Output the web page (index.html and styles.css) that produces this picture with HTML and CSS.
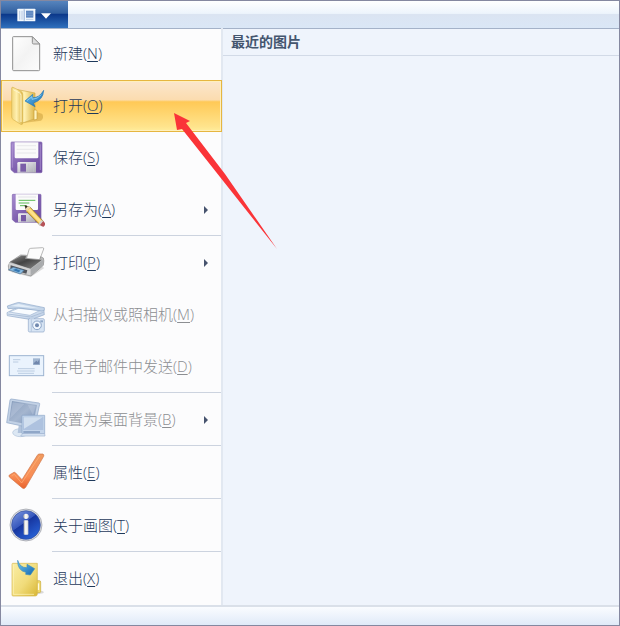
FILE: index.html
```html
<!DOCTYPE html>
<html lang="zh-CN">
<head>
<meta charset="utf-8">
<title>画图</title>
<link rel="stylesheet" href="styles.css">
</head>
<body>
<div class="window">
  <header class="ribbon">
    <button class="app-button" type="button" aria-label="画图">
      <svg class="app-icon" viewBox="0 0 108 42" aria-hidden="true">
        <rect x="1" y="2" width="54" height="38" rx="2" fill="#f4f9fe"/>
        <path d="M8 8v27M15 8v27" stroke="#c3d3e7" stroke-width="4"/>
        <rect x="20" y="4" width="3" height="34" fill="#8eabd2"/>
        <rect x="27" y="8" width="22" height="21" fill="#5d87c0"/>
        <path d="M27 15h22M27 22h22" stroke="#84a5d2" stroke-width="2"/>
        <path d="M27 34h22" stroke="#bacde5" stroke-width="3"/>
        <path d="M72 16h30L87 32z" fill="#fff"/>
      </svg>
    </button>
  </header>
  <div class="backstage">
    <nav class="menu">
      <button class="item" type="button">
        <svg class="icon" viewBox="0 0 120 120" aria-hidden="true">
          <defs><linearGradient id="page" x2="1" y2="1"><stop stop-color="#fff"/><stop offset=".5" stop-color="#f3f3f3"/><stop offset="1" stop-color="#fdfdfd"/></linearGradient></defs>
          <path d="M22 8h57l22 22v77q0 3-3 3H23q-3 0-3-3V10q0-2 2-2z" fill="url(#page)" stroke="#8f8f8f" stroke-width="3"/>
          <path d="M79 8v18q0 4 4 4h18z" fill="#dedede" stroke="#8f8f8f" stroke-width="3"/>
        </svg>
        <span class="label">新建(<u>N</u>)</span>
      </button>
      <button class="item item-active" type="button">
        <svg class="icon" viewBox="0 0 120 120" aria-hidden="true">
          <defs>
            <linearGradient id="fold" x2="1"><stop stop-color="#f1d67d"/><stop offset=".45" stop-color="#fff0b0"/><stop offset="1" stop-color="#dcb64a"/></linearGradient>
            <linearGradient id="blue" x2="1" y2="1"><stop stop-color="#72c8f1"/><stop offset="1" stop-color="#1266b0"/></linearGradient>
          </defs>
          <path d="M45 112l60-8q10-8 4-20l-14-5z" fill="#b88b28" opacity=".4"/>
          <path d="M30 10l57 11v77l-40 14z" fill="url(#fold)" stroke="#d0ac4a" stroke-width="2"/>
          <path d="M84 72h6q3 0 3 4v24l-9 2z" fill="#fff4bd" stroke="#c99f36" stroke-width="2"/>
          <path d="M17 6q0-3 4-2l22 11q7 3 7 10v86q0 6-6 4l-22-14q-5-3-5-8z" fill="url(#fold)" stroke="#d8b44d" stroke-width="2"/>
          <path d="M22 11l19 10q4 2 4 7v80" fill="none" stroke="#fff5ca" stroke-width="3"/>
          <path d="M57 45l23-20v10q20 1 33-22-1 29-31 38l5 11z" fill="url(#blue)" stroke="#2778b7" stroke-width="2"/>
          <path d="M63 44l15-12v8q16 0 28-14" fill="none" stroke="#a4e1fa" stroke-width="2"/>
        </svg>
        <span class="label">打开(<u>O</u>)</span>
      </button>
      <button class="item" type="button">
        <svg class="icon" viewBox="0 0 120 120" aria-hidden="true">
          <defs>
            <linearGradient id="purple" x2="1" y2="1"><stop stop-color="#a78cd0"/><stop offset=".5" stop-color="#8061b0"/><stop offset="1" stop-color="#6d4ba0"/></linearGradient>
            <linearGradient id="metal" x2="1" y2="1"><stop stop-color="#f3f3f5"/><stop offset="1" stop-color="#aaaab3"/></linearGradient>
          </defs>
          <path d="M17 12h88q3 0 3 3v86q0 3-3 3H25l-10-9V15q0-3 2-3z" fill="url(#purple)" stroke="#8064ad" stroke-width="2"/>
          <path d="M26 13h71v44q0 4-4 4H30q-4 0-4-4z" fill="#fafafa"/>
          <path d="M32 23h58M32 34h58M32 45h58" stroke="#dedee2" stroke-width="2"/>
          <path d="M34 104V76q0-4 4-4h52v32z" fill="url(#metal)"/>
          <path d="M43 77h17v24H43z" fill="#7a5da8"/>
          <path d="M68 77v24M83 77v24" stroke="#c3c3ce" stroke-width="2"/>
          <path d="M19 19v70M103 19v77" stroke="#b49bd8" stroke-width="2"/>
        </svg>
        <span class="label">保存(<u>S</u>)</span>
      </button>
      <button class="item" type="button">
        <svg class="icon" viewBox="0 0 120 120" aria-hidden="true">
          <path d="M21 13h82q2 0 2 2v80q0 2-2 2H28l-9-8V15q0-2 2-2z" fill="url(#purple)" stroke="#8064ad" stroke-width="2"/>
          <path d="M29 13h67v44q0 3-3 3H32q-3 0-3-3z" fill="#fbfbfb"/>
          <path d="M36 21h54" stroke="#d8d8de" stroke-width="2"/>
          <path d="M38 31h50M38 39h32M42 47h20" stroke="#5dba57" stroke-width="3"/>
          <path d="M36 97V73q0-3 4-3h48v27z" fill="url(#metal)"/>
          <path d="M45 75h15v19H45z" fill="#7659a5"/>
          <path d="M57 47l16 5 39 42-10 12-40-41z" fill="#e8bd48" stroke="#846a35" stroke-width="2"/>
          <path d="M72 55l36 39-5 7-38-39z" fill="#ffe28a"/>
          <path d="M57 47l16 5-11 13z" fill="#f0d9b0"/>
          <path d="M56 46l9 3-6 7z" fill="#262626"/>
          <path d="M111 93l6 6q2 8-4 11-4 1-11-5z" fill="#b65258"/>
          <path d="M107 90l4 4-10 12-4-4z" fill="#d3d3d3"/>
        </svg>
        <span class="label">另存为(<u>A</u>)</span>
        <i class="more"></i>
      </button>
      <hr class="rule">
      <button class="item" type="button">
        <svg class="icon" viewBox="0 0 120 120" aria-hidden="true">
          <defs>
            <linearGradient id="dark" x2="1" y2="1"><stop stop-color="#8c8c8c"/><stop offset=".45" stop-color="#444"/><stop offset="1" stop-color="#8c8c8c"/></linearGradient>
          </defs>
          <path d="M16 88l58 14 41-27-15-8z" fill="#777" opacity=".25"/>
          <path d="M62 45l7-25q1-4 5-4l36-2q4 0 3 4l-12 32-38 5z" fill="#fcfcfc" stroke="#969696" stroke-width="2"/>
          <path d="M7 68l5-11 32-21 18 1-2 9 42 4 2-9 8 4q3 6 0 22L75 99 8 82z" fill="#b9babb" stroke="#8b8b8b" stroke-width="2"/>
          <path d="M12 57l34-19 14 1-2 8 42 4 8-1-35 27z" fill="url(#dark)"/>
          <path d="M10 59l63 19v19L8 80z" fill="#d2d3d4"/>
          <path d="M75 78l36-27-1 17-35 28z" fill="#a9abad"/>
          <path d="M14 67l50 15-3 10-48-14z" fill="#50545b"/>
          <path d="M8 80l14-7 32 9-11 11z" fill="#8bbce0" stroke="#4d769d" stroke-width="2"/>
          <path d="M20 81l10-4 14 6-6 5z" fill="#3577b2"/>
        </svg>
        <span class="label">打印(<u>P</u>)</span>
        <i class="more"></i>
      </button>
      <button class="item" type="button" disabled>
        <svg class="icon" viewBox="0 0 120 120" aria-hidden="true">
          <defs><linearGradient id="haze" x2="1" y2="1"><stop stop-color="#f1f7fd"/><stop offset="1" stop-color="#b7cae3"/></linearGradient></defs>
          <path d="M3 53l31-16 79 7 2 15-39 15L4 62z" fill="url(#haze)" stroke="#91a9c8" stroke-width="2"/>
          <path d="M10 51l27-11 66 6-31 15z" fill="#f9fcff" stroke="#a2b7d3" stroke-width="2"/>
          <path d="M4 33l30-10q4-1 8 0l73 15v8l-7 2-68-9-34 2z" fill="#c4d5e9" stroke="#8ea7c9" stroke-width="2"/>
          <path d="M14 33l24-6 60 13-60-5z" fill="#e4eef8"/>
          <path d="M5 57l69 9 41-15" fill="none" stroke="#adc0d9" stroke-width="3"/>
          <rect x="67" y="71" width="48" height="40" rx="4" fill="#d8e5f4" stroke="#90a7c8" stroke-width="2"/>
          <rect x="72" y="66" width="12" height="6" fill="#bfd0e5"/>
          <path d="M76 73v37" stroke="#a9bdd8" stroke-width="2"/>
          <circle cx="93" cy="91" r="13" fill="#f2f8fe" stroke="#8ba4c7" stroke-width="3"/>
          <circle cx="93" cy="91" r="6" fill="#7189af"/>
          <path d="M103 76h8v6h-8z" fill="#8fa8c9"/>
        </svg>
        <span class="label">从扫描仪或照相机(<u>M</u>)</span>
      </button>
      <button class="item" type="button" disabled>
        <svg class="icon" viewBox="0 0 120 120" aria-hidden="true">
          <rect x="10" y="26" width="103" height="60" fill="#eaf3fd" stroke="#9db4d1" stroke-width="3"/>
          <path d="M21 38h22M21 45h16M36 65h50M33 72h53M36 79h48" stroke="#a4b9d5" stroke-width="2"/>
          <rect x="81" y="34" width="21" height="20" fill="#a1b6d1"/>
          <path d="M83 49l8-8 4 4 5-8v15H83z" fill="#7187ad"/>
        </svg>
        <span class="label">在电子邮件中发送(<u>D</u>)</span>
      </button>
      <hr class="rule">
      <button class="item" type="button" disabled>
        <svg class="icon" viewBox="0 0 120 120" aria-hidden="true">
          <defs><linearGradient id="screen" x2="1" y2="1"><stop stop-color="#8399ba"/><stop offset=".5" stop-color="#a5b6cf"/><stop offset="1" stop-color="#7791b7"/></linearGradient></defs>
          <ellipse cx="43" cy="98" rx="23" ry="12" fill="#dce7f3" stroke="#b1c2da" stroke-width="2"/>
          <path d="M38 77h20v22H35z" fill="#b1c3dc"/>
          <path d="M16-3l83 12q3 1 2 4L85 86 2 68 12 0q1-3 4-3z" fill="#c3d2e6" stroke="#8ca4c6" stroke-width="2"/>
          <path d="M18 3l75 12-12 61L9 62z" fill="url(#screen)"/>
          <path d="M20 7l35 5-42 43zM65 14l24 4-8 28z" fill="#c0cee0" opacity=".4"/>
          <path d="M48 46h68v55H48z" fill="#c4d5eb" stroke="#8da6c9" stroke-width="2"/>
          <path d="M51 50h61v40H51z" fill="#aec2df"/>
          <path d="M53 52h57L54 86z" fill="#d1dfef"/>
          <path d="M50 101h66l1 7H44z" fill="#dce7f4" stroke="#9eb2d0" stroke-width="2"/>
          <path d="M52 96h50" stroke="#7791b8" stroke-width="4"/>
        </svg>
        <span class="label">设置为桌面背景(<u>B</u>)</span>
        <i class="more"></i>
      </button>
      <hr class="rule">
      <button class="item" type="button">
        <svg class="icon" viewBox="0 0 120 120" aria-hidden="true">
          <defs><linearGradient id="tick" x2="0" y2="1"><stop stop-color="#f09a5e"/><stop offset=".65" stop-color="#f98d55"/><stop offset="1" stop-color="#e9622b"/></linearGradient></defs>
          <path d="M10 66l14-8q3-1 5 2l19 20L94 7q2-4 6-4h11q4 2 2 7L59 103q-5 7-11 1L10 72q-2-4 0-6z" fill="url(#tick)" stroke="#cf7449" stroke-width="2"/>
          <path d="M17 68l8-4 22 26L101 9" fill="none" stroke="#ffb37d" stroke-width="2"/>
        </svg>
        <span class="label">属性(<u>E</u>)</span>
      </button>
      <hr class="rule">
      <button class="item" type="button">
        <svg class="icon" viewBox="0 0 120 120" aria-hidden="true">
          <defs>
            <linearGradient id="orb" x2=".7" y2="1"><stop stop-color="#829ce1"/><stop offset=".48" stop-color="#3657bd"/><stop offset=".5" stop-color="#1736a0"/><stop offset="1" stop-color="#2861d5"/></linearGradient>
            <linearGradient id="letter" x2="1"><stop stop-color="#aaa"/><stop offset=".45" stop-color="#fff"/><stop offset="1" stop-color="#d4d4d4"/></linearGradient>
          </defs>
          <circle cx="60" cy="57" r="48" fill="#d9dbe0" stroke="#9699a3" stroke-width="2"/>
          <circle cx="60" cy="57" r="43" fill="url(#orb)" stroke="#334f9f" stroke-width="2"/>
          <circle cx="60" cy="31" r="8" fill="url(#letter)"/>
          <rect x="53" y="43" width="14" height="43" rx="2" fill="url(#letter)"/>
        </svg>
        <span class="label">关于画图(<u>T</u>)</span>
      </button>
      <hr class="rule">
      <button class="item" type="button">
        <svg class="icon" viewBox="0 0 120 120" aria-hidden="true">
          <defs><linearGradient id="exit" x2="1" y2="1"><stop stop-color="#faeea6"/><stop offset=".55" stop-color="#f1dc7b"/><stop offset="1" stop-color="#d9b735"/></linearGradient></defs>
          <path d="M75 109l36-6q5-4-2-7l-20-2z" fill="#999" opacity=".35"/>
          <path d="M91 65h9q4 0 4 4v28q0 4-4 4H90z" fill="#f1d969" stroke="#c9aa3b" stroke-width="2"/>
          <path d="M97 73v20" stroke="#fffbe0" stroke-width="5"/>
          <path d="M20 13h74v92q0 6-6 6H21q-3 0-3-3V16q0-3 2-3z" fill="url(#exit)" stroke="#d4b64d" stroke-width="2"/>
          <path d="M22 17v89h62" fill="none" stroke="#fff6bd" stroke-width="2"/>
          <path d="M35 4q7 23 28 22V16l23 13-13 19-14-2 1-6Q34 35 35 4z" fill="url(#blue)" stroke="#3b8dbd" stroke-width="2"/>
        </svg>
        <span class="label">退出(<u>X</u>)</span>
      </button>
    </nav>
    <main class="recent">
      <h1 class="recent-title">最近的图片</h1>
    </main>
    <svg class="pointer" viewBox="0 0 104 136" aria-hidden="true">
      <path d="M0 0l16 8-4 2 39 51 52 75-57-72L8 16l-5 1z" fill="#fa3438"/>
    </svg>
  </div>
  <footer class="status"></footer>
</div>
</body>
</html>
```
FILE: styles.css
```css
* {
  box-sizing: border-box;
}

body {
  margin: 0;
  font-family: "Open Sans", "Noto Sans CJK SC", sans-serif;
  font-size: 15px;
  color: #1e395b;
}

.window {
  display: flex;
  flex-direction: column;
  min-height: 100vh;
  border: 1px solid #8588a0;
  background: #eff4fc;
}

.ribbon {
  display: flex;
  height: 28px;
  border-bottom: 1px solid #a4b2c8;
  background: linear-gradient(#ffffff, #edf4fc 46%, #dbe4f2 50%, #dae7f6);
}

.app-button {
  width: 67px;
  padding: 0 0 0 16px;
  border: 0;
  background: linear-gradient(#5684bd, #315f9f 45%, #0c398b 50%, #2f70bd);
}

.app-icon {
  display: block;
  width: 36px;
  height: 14px;
}

.backstage {
  position: relative;
  display: flex;
  flex: 1;
}

.menu {
  display: flex;
  flex-direction: column;
  width: 222px;
  margin-top: -1px;
  border-right: 2px solid #e2e8f1;
  background: linear-gradient(#fcfcfd, #fcfcfd) 0 1px no-repeat;
}

.item {
  display: flex;
  align-items: center;
  gap: 7px;
  height: 52px;
  padding: 0 13px 0 5px;
  border: 0;
  background: none;
  font: inherit;
  font-weight: 300;
  line-height: 20px;
  color: #1e395b;
  text-align: left;
  white-space: nowrap;
}

.item:disabled {
  color: #8c8e92;
}

.label {
  padding-bottom: 2px;
}

.label u {
  text-underline-offset: 2px;
}

.item-active {
  margin-right: -1px;
  background: linear-gradient(#fbe7cf, #fbdcaf 38%, #ffc956 42%, #ffe48d 90%, #fff0a0);
  box-shadow: inset 0 0 0 1px #e6b640, inset 0 0 0 2px #fff0bd;
}

.icon {
  flex: none;
  width: 40px;
  height: 40px;
  overflow: visible;
}

.more {
  margin-left: auto;
  border: solid transparent;
  border-width: 4px 0 4px 4px;
  border-left-color: #46536e;
}

.rule {
  width: auto;
  height: 1px;
  margin: -1px 0 1px 51px;
  border: 0;
  background: #ccd3df;
}

.recent {
  flex: 1;
}

.recent-title {
  margin: 0;
  padding: 0 8px;
  border-bottom: 1px solid #d2dae7;
  font-size: 14px;
  font-weight: 700;
  line-height: 26px;
  color: #44566f;
}

.pointer {
  position: absolute;
  top: 84px;
  left: 173px;
  width: 104px;
  height: 136px;
  pointer-events: none;
}

.status {
  height: 20px;
  border-top: 2px solid #dae0e9;
  background: linear-gradient(#fafcff, #e0eaf8);
}
```
